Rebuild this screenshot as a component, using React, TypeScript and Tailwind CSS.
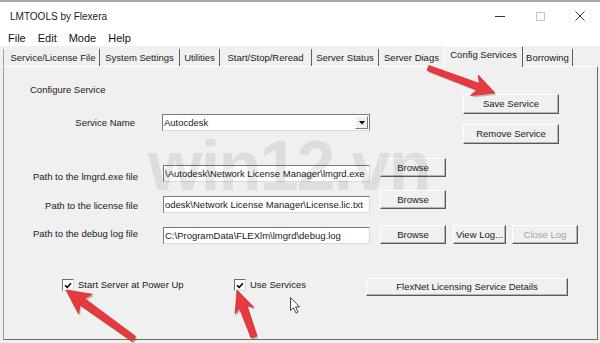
import type { ReactNode } from 'react'

const font = { fontFamily: '"Liberation Sans", Arial, sans-serif' }

const tabs: [string, number][] = [
  ['Service/License File', 97],
  ['System Settings', 80],
  ['Utilities', 40],
  ['Start/Stop/Reread', 92],
  ['Server Status', 67],
  ['Server Diags', 65],
  ['Config Services', 79],
  ['Borrowing', 50],
]

function arrowPoints(tx: number, ty: number, hx: number, hy: number, shaft = 7, headLen = 22, headW = 22) {
  const dx = hx - tx
  const dy = hy - ty
  const len = Math.hypot(dx, dy)
  const ux = dx / len
  const uy = dy / len
  const nx = -uy
  const ny = ux
  const bx = hx - ux * headLen
  const by = hy - uy * headLen
  const pts = [
    [tx + (nx * shaft) / 2.6, ty + (ny * shaft) / 2.6],
    [bx + ux * 4 + (nx * shaft) / 2, by + uy * 4 + (ny * shaft) / 2],
    [bx + (nx * headW) / 2, by + (ny * headW) / 2],
    [hx, hy],
    [bx - (nx * headW) / 2, by - (ny * headW) / 2],
    [bx + ux * 4 - (nx * shaft) / 2, by + uy * 4 - (ny * shaft) / 2],
    [tx - (nx * shaft) / 2.6, ty - (ny * shaft) / 2.6],
  ]
  return pts.map((p) => p.map((v) => v.toFixed(1)).join(',')).join(' ')
}

const arrows = [
  arrowPoints(428, 68, 495, 93, 7, 22, 22),
  arrowPoints(134, 339, 66, 290, 8, 24, 24),
  arrowPoints(254, 337, 237, 290, 8, 22, 20),
]

function Btn({ children, className = '', disabled = false }: { children: ReactNode; className?: string; disabled?: boolean }) {
  return (
    <div
      className={
        'flex items-center justify-center bg-[#f0f0f0] border border-t-white border-l-white border-r-[#5a5a5a] border-b-[#5a5a5a] shadow-[inset_-1px_-1px_0_#b4b4b4] leading-none whitespace-nowrap ' +
        (disabled ? 'text-[#a3a3a3] ' : 'text-[#1a1a1a] ') +
        className
      }
    >
      {children}
    </div>
  )
}

function Field({ value, className = '' }: { value: string; className?: string }) {
  return (
    <div
      className={
        'flex items-center bg-white border border-t-[#7a7a7a] border-l-[#7a7a7a] border-r-[#dadada] border-b-[#dadada] overflow-hidden whitespace-nowrap pl-[1px] leading-none text-[#1a1a1a] ' +
        className
      }
    >
      {value}
    </div>
  )
}

function Check({ label, className = '' }: { label: string; className?: string }) {
  return (
    <div className={'flex items-center h-[12px] mt-[1px] ' + className}>
      <div className="w-[12px] h-[12px] bg-white border border-t-[#6e6e6e] border-l-[#6e6e6e] border-r-[#d8d8d8] border-b-[#d8d8d8] flex items-center justify-center">
        <svg width="8" height="7" viewBox="0 0 8 7">
          <path d="M1 3.2 L3.2 5.4 L7 1.2" stroke="#000" strokeWidth="1.5" fill="none" />
        </svg>
      </div>
      <span className="ml-[4px] leading-none text-[#1a1a1a]">{label}</span>
    </div>
  )
}

export default function App() {
  return (
    <div style={font} className="relative w-[600px] h-[343px] overflow-hidden bg-white text-[9.5px] flex flex-col">
      {/* title bar */}
      <div className="h-[30px] border-t-2 border-[#a9a9a9] flex items-center justify-between">
        <span className="ml-[10px] text-[10px] text-[#222]">LMTOOLS by Flexera</span>
        <div className="flex h-full">
          <div className="w-[40px] flex items-center justify-center">
            <div className="w-[10px] h-px bg-[#333]" />
          </div>
          <div className="w-[40px] flex items-center justify-center">
            <div className="w-[9px] h-[9px] border border-[#c4c4c4]" />
          </div>
          <div className="w-[40px] flex items-center justify-center">
            <svg width="10" height="10" viewBox="0 0 10 10">
              <path d="M0.5 0.5 L9.5 9.5 M9.5 0.5 L0.5 9.5" stroke="#333" strokeWidth="1" />
            </svg>
          </div>
        </div>
      </div>

      {/* menu */}
      <div className="h-[16px] flex items-center gap-3 pl-2 text-[11px] text-[#111]">
        <span>File</span>
        <span>Edit</span>
        <span>Mode</span>
        <span>Help</span>
      </div>

      {/* client area */}
      <div className="flex-1 bg-[#f0f0f0] pl-[3px] flex flex-col">
        <div className="h-[20px] flex items-end">
          {tabs.map(([name, w], i) => {
            const selected = name === 'Config Services'
            if (selected) {
              return (
                <div
                  key={name}
                  style={{ width: w }}
                  className="relative z-10 h-[21px] -mb-px bg-[#f0f0f0] border-t border-l border-r border-t-white border-l-white border-r-[#5a5a5a] flex items-center justify-center pb-[3px] text-[#1a1a1a] whitespace-nowrap"
                >
                  {name}
                </div>
              )
            }
            return (
              <div
                key={name}
                style={{ width: w }}
                className={
                  'h-[17px] flex items-center justify-center pt-[2px] text-[#1a1a1a] whitespace-nowrap ' +
                  (i === 0 ? 'border-l border-[#a0a0a0] pl-[3px] ' : '') +
                  (i === 5 ? '' : 'border-r border-r-[#5e5e5e]')
                }
              >
                {name}
              </div>
            )
          })}
        </div>

        {/* panel */}
        <div className="w-[595px] h-[274px] border-t border-l border-r border-b border-t-white border-l-[#a0a0a0] border-r-[#6a6a6a] border-b-[#6a6a6a] flex flex-col">
          {/* top section */}
          <div className="flex items-start">
            <div className="pl-[26px] flex flex-col">
              <div className="mt-[17px] h-[12px] leading-[12px] text-[#1a1a1a]">Configure Service</div>
              <div className="mt-[18px] flex items-center h-[17px]">
                <div className="w-[105px] text-right leading-none text-[#1a1a1a]">Service Name</div>
                <div className="ml-[27px] w-[208px] h-[17px] bg-white border border-t-[#7a7a7a] border-l-[#7a7a7a] border-r-[#7a7a7a] border-b-[#dadada] flex items-center pl-[1px] leading-none text-[#1a1a1a]">
                  <span className="flex-1">Autocdesk</span>
                  <div className="w-[13px] h-[13px] mr-[1px] bg-[#f0f0f0] border border-t-white border-l-white border-r-[#7a7a7a] border-b-[#7a7a7a] flex items-center justify-center">
                    <svg width="6" height="4" viewBox="0 0 6 4">
                      <path d="M0 0 L6 0 L3 3.5 Z" fill="#000" />
                    </svg>
                  </div>
                </div>
              </div>
            </div>
            <div className="ml-auto mr-[38px] flex flex-col">
              <Btn className="mt-[27px] w-[96px] h-[20px]">Save Service</Btn>
              <Btn className="mt-[10px] w-[96px] h-[20px]">Remove Service</Btn>
            </div>
          </div>

          {/* path rows */}
          <div className="mt-[14px] flex items-start">
            <div className="w-[134px] mt-[13px] h-[12px] leading-[12px] text-right text-[#1a1a1a]">Path to the lmgrd.exe file</div>
            <Field className="ml-[25px] mt-[7px] w-[207px] h-[17px]" value="\Autodesk\Network License Manager\lmgrd.exe" />
            <Btn className="ml-[10px] w-[66px] h-[19px]">Browse</Btn>
          </div>
          <div className="mt-[7px] flex items-start">
            <div className="w-[134px] mt-[10px] h-[12px] leading-[12px] text-right text-[#1a1a1a]">Path to the license file</div>
            <Field className="ml-[25px] mt-[6px] w-[207px] h-[17px]" value="odesk\Network License Manager\License.lic.txt" />
            <Btn className="ml-[10px] w-[66px] h-[19px]">Browse</Btn>
          </div>
          <div className="mt-[12px] flex items-start">
            <div className="w-[134px] mt-[3px] h-[12px] leading-[12px] text-right text-[#1a1a1a]">Path to the debug log file</div>
            <Field className="ml-[25px] mt-[2px] w-[207px] h-[17px]" value="C:\ProgramData\FLEXlm\lmgrd\debug.log" />
            <Btn className="ml-[10px] w-[66px] h-[19px]">Browse</Btn>
            <Btn className="ml-[7px] w-[53px] h-[19px]">View Log...</Btn>
            <Btn className="ml-[6px] w-[66px] h-[19px]" disabled>
              Close Log
            </Btn>
          </div>

          {/* checkboxes */}
          <div className="mt-[34px] flex items-start">
            <Check label="Start Server at Power Up" className="ml-[58px] w-[172px]" />
            <Check label="Use Services" className="w-[132px]" />
            <Btn className="w-[202px] h-[18px]">FlexNet Licensing Service Details</Btn>
          </div>
        </div>
      </div>

      {/* watermark */}
      <div className="absolute left-[148px] top-[131px] text-[70px] font-bold leading-none text-black/[0.08] pointer-events-none tracking-tight">
        win12.vn
      </div>

      {/* annotations */}
      <svg className="absolute inset-0 pointer-events-none" width="600" height="343" viewBox="0 0 600 343">
        {arrows.map((p, i) => (
          <g key={i}>
            <polygon points={p} fill="#000" opacity="0.22" transform="translate(1.5,2)" />
            <polygon points={p} fill="#e63a3f" stroke="#d02c33" strokeWidth="0.8" strokeLinejoin="round" />
          </g>
        ))}
        <path
          d="M290.5 297.5 L290.5 310.5 L293.5 307.8 L296 313 L298 312 L295.6 306.9 L299.5 306.9 Z"
          fill="#fff"
          stroke="#333"
          strokeWidth="0.9"
          strokeLinejoin="round"
        />
      </svg>
    </div>
  )
}
